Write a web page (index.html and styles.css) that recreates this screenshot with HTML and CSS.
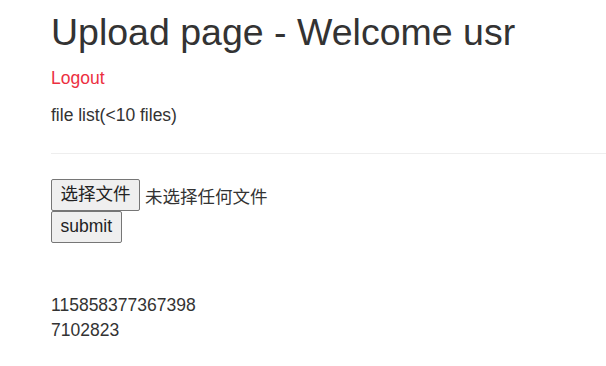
FILE: index.html
```html
<!DOCTYPE html>
<html lang="zh">
<head>
<meta charset="utf-8">
<title>Upload page</title>
<link rel="stylesheet" href="styles.css">
</head>
<body>
<div class="container">
  <h1 class="title">Upload page - Welcome usr</h1>
  <p class="para"><a class="logout" href="#">Logout</a></p>
  <p class="para">file list(&lt;10 files)</p>
  <hr class="rule">
  <form class="upload">
    <div class="file-row">
      <button type="button" class="btn">选择文件</button>
      <span class="file-status">未选择任何文件</span>
    </div>
    <button type="button" class="btn">submit</button>
  </form>
  <div class="files">
    <div class="file-item">115858377367398</div>
    <div class="file-item">7102823</div>
  </div>
</div>
</body>
</html>
```
FILE: styles.css
```css
html, body {
  margin: 0;
  padding: 0;
  background: #fff;
}
body {
  font-family: "Liberation Sans", Arial, "Noto Sans CJK SC", sans-serif;
  font-size: 17.5px;
  line-height: 25px;
  color: #333;
}
.container {
  padding-left: 51px;
}
.title {
  font-size: 37.5px;
  font-weight: 400;
  line-height: 1.1;
  margin: 12px 0 12.5px;
  color: #333;
}
.para {
  margin: 0 0 12.5px;
}
.logout {
  color: #ec2f3f;
  text-decoration: none;
}
.rule {
  border: 0;
  border-top: 1px solid #eee;
  margin: 25px 0;
  height: 0;
}
.upload {
  display: flex;
  flex-direction: column;
  align-items: flex-start;
}
.file-row {
  display: flex;
  align-items: center;
  gap: 5px;
}
.btn {
  font-family: "Liberation Sans", Arial, "Noto Sans CJK SC", sans-serif;
  font-size: 17.5px;
  color: #222;
  background: #efefef;
  border: 1px solid #767676;
  border-radius: 2px;
  height: 32px;
  padding: 0 8.5px 1px;
  margin: 0;
  line-height: 29px;
}
.file-status {
  font-family: "Noto Sans CJK SC", sans-serif;
  font-size: 17.5px;
  color: #333;
}
.files {
  margin-top: 50px;
}
```
